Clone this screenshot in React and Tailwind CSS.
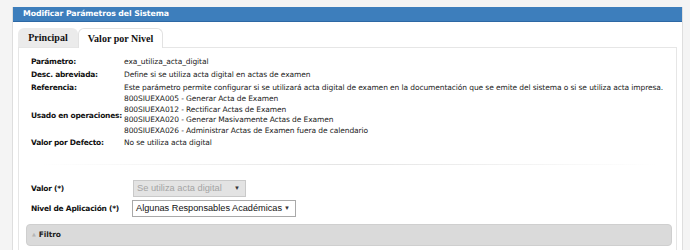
import React from "react";

const V = { fontFamily: '"DejaVu Sans", Verdana, sans-serif' };
const A = { fontFamily: '"Liberation Sans", Arial, sans-serif' };
const S = { fontFamily: '"Liberation Serif", "Times New Roman", serif' };

function Row({ label, children }) {
  return (
    <div className="flex items-center">
      <div className="w-[93px] shrink-0 font-bold text-[#111] whitespace-nowrap tracking-[-0.25px]">{label}</div>
      <div className="text-[#222] whitespace-nowrap">{children}</div>
    </div>
  );
}

export default function App() {
  return (
    <div className="w-[690px] h-[250px] overflow-hidden bg-[#f4f4f4] pt-[7px] pl-[12px] pr-[7px] text-[7.5px] tracking-[-0.1px]" style={V}>
      <div className="bg-white border-l border-r border-[#dedede] h-[260px]">
        <div className="h-[15px] bg-[#3d7ebc] border-b border-[#2d68a4] text-white font-bold text-[7.8px] leading-[14px] pl-[10px]">
          Modificar Parámetros del Sistema
        </div>
        <div className="px-[5px] pt-[5px]">
          <div className="flex items-end h-[20px] tracking-normal">
            <div className="w-[60px] h-[19px] bg-[#ebebeb] rounded-t-[6px] flex items-center justify-center font-bold text-[10px] text-[#111]" style={S}>
              Principal
            </div>
            <div className="w-[85px] h-[20px] bg-white border border-b-0 border-[#e2e2e2] rounded-t-[6px] flex items-center justify-center font-bold text-[10px] text-[#111] relative top-[1px]" style={S}>
              Valor por Nivel
            </div>
          </div>
          <div className="border border-[#e6e6e6] pl-[7px] pr-[4px] pt-[7px] h-[220px]">
            <div className="pl-[5px] leading-[13px]">
              <Row label="Parámetro:">exa_utiliza_acta_digital</Row>
              <Row label="Desc. abreviada:">Define si se utiliza acta digital en actas de examen</Row>
              <Row label="Referencia:">Este parámetro permite configurar si se utilizará acta digital de examen en la documentación que se emite del sistema o si se utiliza acta impresa.</Row>
              <div className="flex items-center">
                <div className="w-[93px] shrink-0 font-bold text-[#111] whitespace-nowrap tracking-[-0.25px]">Usado en operaciones:</div>
                <div className="text-[#222] leading-[10.5px] whitespace-nowrap">
                  <div>800SIUEXA005 - Generar Acta de Examen</div>
                  <div>800SIUEXA012 - Rectificar Actas de Examen</div>
                  <div>800SIUEXA020 - Generar Masivamente Actas de Examen</div>
                  <div>800SIUEXA026 - Administrar Actas de Examen fuera de calendario</div>
                </div>
              </div>
              <Row label="Valor por Defecto:">No se utiliza acta digital</Row>
            </div>
            <div className="mt-[15px] h-px mx-[14px] bg-gradient-to-r from-transparent via-[#e4e4e4] to-transparent" />
            <div className="mt-[15px] pl-[5px] flex flex-col gap-[3px]">
              <div className="flex items-center">
                <div className="w-[102px] font-bold text-[#111] whitespace-nowrap tracking-[-0.25px]">Valor (*)</div>
                <div className="w-[113px] h-[17px] bg-[#e3e3e3] border border-[#c9c9c9] flex items-center pl-[3px] pr-[5px] text-[9.3px] tracking-normal text-[#a3a3a3] whitespace-nowrap" style={A}>
                  <span className="flex-1">Se utiliza acta digital</span>
                  <span className="text-[6px] text-[#333]">▼</span>
                </div>
              </div>
              <div className="flex items-center">
                <div className="w-[101px] font-bold text-[#111] whitespace-nowrap tracking-[-0.25px]">Nivel de Aplicación (*)</div>
                <div className="w-[164px] h-[17px] bg-white border border-[#a9a9a9] flex items-center pl-[3px] pr-[5px] text-[9.2px] tracking-normal text-[#111] whitespace-nowrap" style={A}>
                  <span className="flex-1">Algunas Responsables Académicas</span>
                  <span className="text-[6px] text-[#333]">▼</span>
                </div>
              </div>
            </div>
            <div className="mt-[7px] h-[22px] bg-[#dadada] border border-[#cfcfcf] rounded-[4px] flex items-center pl-[5px] gap-[3px]">
              <span className="text-[5px] text-[#b5b5b5]">▲</span>
              <span className="font-bold text-[#222]">Filtro</span>
            </div>
          </div>
        </div>
      </div>
    </div>
  );
}
